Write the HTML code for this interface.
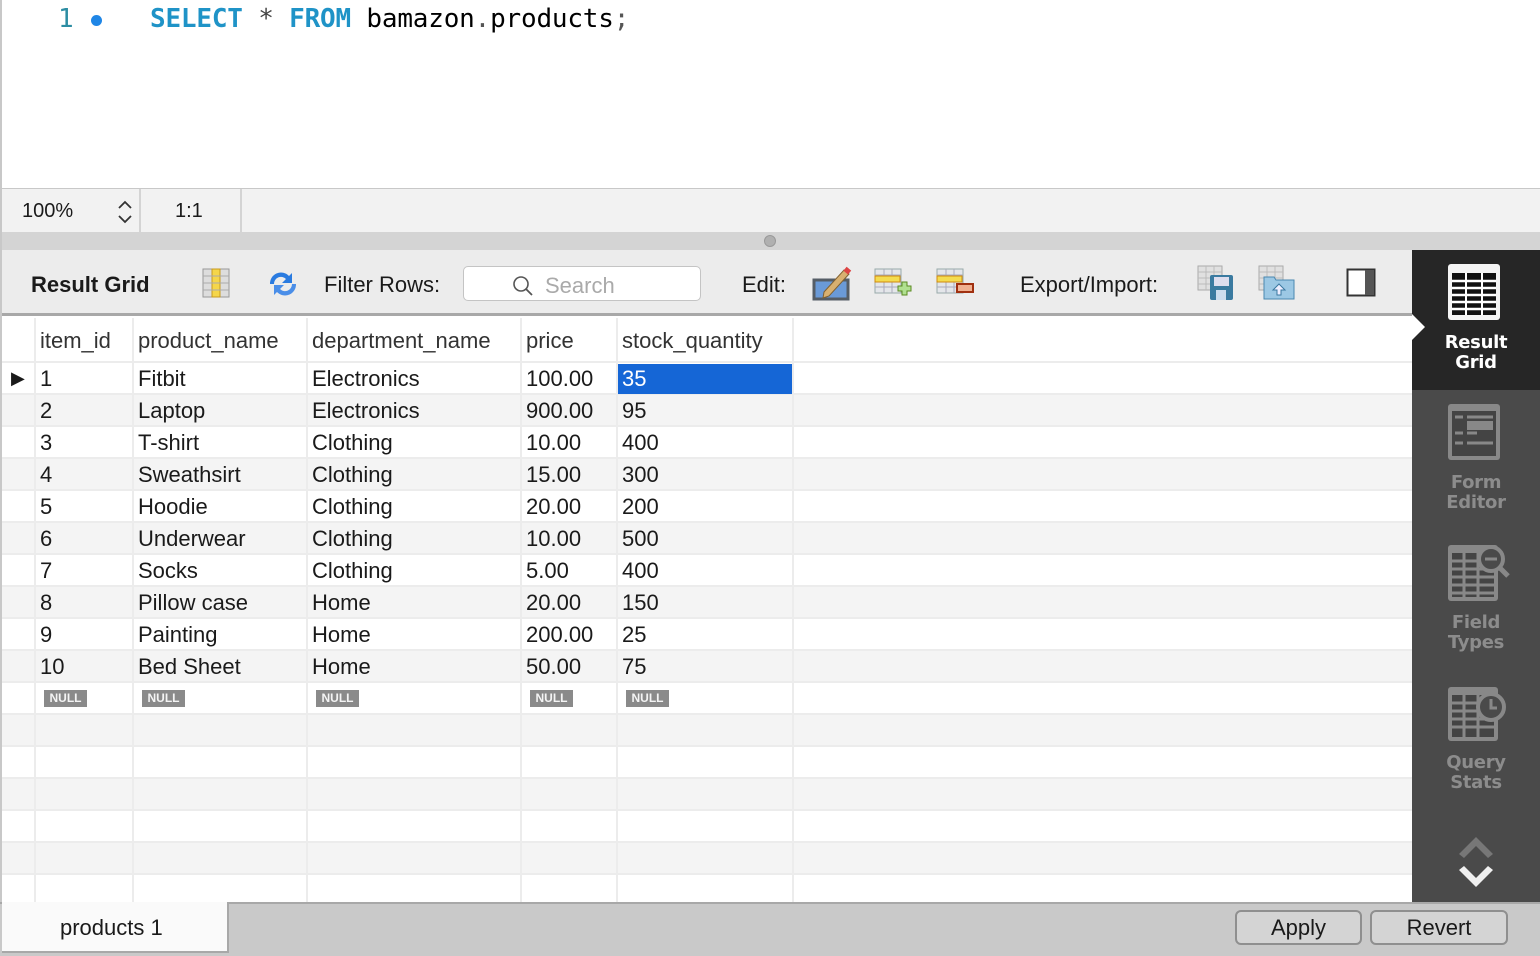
<!DOCTYPE html>
<html><head><style>
*{margin:0;padding:0;box-sizing:border-box}
body{width:1540px;height:956px;overflow:hidden;background:#fff;font-family:"Liberation Sans",sans-serif;position:relative}
.a{position:absolute}
.code{font-family:"DejaVu Sans Mono","Liberation Mono",monospace;font-size:26px;top:4px;white-space:pre;letter-spacing:-0.2px}
.t{font-size:22px;color:#1a1a1a;white-space:nowrap}
.row{position:absolute;left:2px;width:1410px;height:32px;border-bottom:2px solid #ececec}
.vl{position:absolute;top:318px;width:2px;height:584px;background:#ececec}
.null{position:absolute;background:#8a8a8a;color:#f4f4f4;font-size:12px;font-weight:bold;padding:1px 3px;line-height:15px;width:43px;text-align:center}
.side{position:absolute;left:1412px;width:128px;text-align:center;font-family:"DejaVu Sans",sans-serif;font-size:18px;line-height:20px;color:#8c8c8c;font-weight:bold;letter-spacing:-0.3px}
.btn{position:absolute;top:910px;height:35px;border:2px solid #8f8f8f;border-radius:6px;background:#d4d4d4;font-size:22px;text-align:center;line-height:31px;color:#1a1a1a}
</style></head><body>
<div class="a" style="left:0;top:0;width:2px;height:956px;background:#c8c8c8"></div>
<div class="a code" style="left:58px;color:#2d8da3">1</div>
<div class="a" style="left:91px;top:15px;width:11px;height:11px;border-radius:50%;background:#1f86e6"></div>
<div class="a code" style="left:150px"><span style="color:#1f93c7;font-weight:bold">SELECT</span> <span style="color:#444">*</span> <span style="color:#1f93c7;font-weight:bold">FROM</span> bamazon<span style="color:#555">.</span>products<span style="color:#555">;</span></div>

<div class="a" style="left:2px;top:188px;width:1538px;height:44px;background:#f2f2f2;border-top:1px solid #c8c8c8"></div>
<div class="a t" style="left:22px;top:200px;font-size:20px">100%</div>
<svg class="a" style="left:117px;top:199px" width="16" height="28"><path d="M2 9l6-6 6 6M2 17l6 6 6-6" fill="none" stroke="#333" stroke-width="1.8"/></svg>
<div class="a" style="left:139px;top:189px;width:2px;height:43px;background:#d4d4d4"></div>
<div class="a t" style="left:175px;top:200px;font-size:20px">1:1</div>
<div class="a" style="left:240px;top:189px;width:2px;height:43px;background:#d4d4d4"></div>
<div class="a" style="left:2px;top:232px;width:1538px;height:18px;background:#d4d4d4"></div>
<div class="a" style="left:764px;top:235px;width:12px;height:12px;border-radius:50%;background:#b0b0b0;border:1px solid #999"></div>

<div class="a" style="left:2px;top:250px;width:1410px;height:66px;background:#ececec;border-bottom:3px solid #a8a8a8"></div>
<div class="a t" style="left:31px;top:272px;font-weight:bold">Result Grid</div>
<svg class="a" style="left:202px;top:268px" width="28" height="30"><rect x="1" y="1" width="26" height="28" fill="#ddd" stroke="#999"/><rect x="10" y="1" width="8" height="28" fill="#f5d64a" stroke="#c89a20"/><path d="M1 8h26M1 15h26M1 22h26" stroke="#aaa"/></svg>
<svg class="a" style="left:266px;top:270px" width="34" height="28"><path d="M4 14a11 11 0 0 1 19-8l3-3v10h-10l4-4a7 7 0 0 0-12 5z" fill="#2a7be0"/><path d="M30 14a11 11 0 0 1-19 8l-3 3v-10h10l-4 4a7 7 0 0 0 12-5z" fill="#4a8ee8"/></svg>
<div class="a t" style="left:324px;top:272px">Filter Rows:</div>
<div class="a" style="left:463px;top:266px;width:238px;height:35px;background:#fff;border:1px solid #c4c4c4;border-radius:5px"></div>
<svg class="a" style="left:512px;top:275px" width="22" height="22"><circle cx="9" cy="9" r="7" fill="none" stroke="#555" stroke-width="1.6"/><path d="M14 14l6 6" stroke="#555" stroke-width="1.8"/></svg>
<div class="a t" style="left:545px;top:273px;color:#aaa">Search</div>
<div class="a t" style="left:742px;top:272px">Edit:</div>
<svg class="a" style="left:812px;top:266px" width="40" height="36"><rect x="2" y="14" width="34" height="19" fill="#6a9ad8" stroke="#555d66" stroke-width="3"/><path d="M12 26l20-22 5 4-20 22-6 2z" fill="#d8b070" stroke="#806030"/><rect x="32" y="2" width="6" height="5" fill="#d44" transform="rotate(40 35 5)"/></svg>
<svg class="a" style="left:874px;top:268px" width="38" height="30"><rect x="1" y="1" width="26" height="24" fill="#e4e6ea" stroke="#9aa"/><path d="M1 7h26M1 19h26M10 1v24M18 1v24" stroke="#aab"/><rect x="1" y="8" width="25" height="6" fill="#f4dc50" stroke="#d08a10"/><path d="M27 18h4v-4h5v4h4v5h-4v4h-5v-4h-4z" fill="#b0e090" stroke="#5a8a20" transform="translate(-3,0)"/></svg>
<svg class="a" style="left:936px;top:268px" width="40" height="30"><rect x="1" y="1" width="26" height="24" fill="#e4e6ea" stroke="#9aa"/><path d="M1 7h26M1 19h26M10 1v24M18 1v24" stroke="#aab"/><rect x="1" y="8" width="25" height="6" fill="#f4dc50" stroke="#d08a10"/><rect x="21" y="16" width="16" height="8" fill="#f0b090" stroke="#a03010" stroke-width="2"/></svg>
<div class="a t" style="left:1020px;top:272px">Export/Import:</div>
<svg class="a" style="left:1197px;top:265px" width="38" height="36"><rect x="1" y="1" width="24" height="24" fill="#e0e0e0" stroke="#aaa"/><path d="M1 7h24M1 13h24M1 19h24M9 1v24M17 1v24" stroke="#bbb"/><rect x="13" y="10" width="23" height="25" rx="2" fill="#3a7aa0"/><rect x="17" y="12" width="15" height="9" fill="#dde"/><rect x="19" y="25" width="10" height="10" fill="#cde"/></svg>
<svg class="a" style="left:1258px;top:265px" width="38" height="36"><rect x="1" y="1" width="24" height="24" fill="#e0e0e0" stroke="#aaa"/><path d="M1 7h24M1 13h24M1 19h24M9 1v24M17 1v24" stroke="#bbb"/><path d="M6 12h10l2 3h18v19h-30z" fill="#9cc8e4" stroke="#4a88b0"/><path d="M21 19l6 6h-4v5h-4v-5h-4z" fill="#eef" stroke="#3a78a0"/></svg>
<svg class="a" style="left:1346px;top:268px" width="30" height="30"><rect x="1.5" y="1.5" width="27" height="26" fill="#fff" stroke="#333" stroke-width="2"/><rect x="19" y="2" width="9" height="25" fill="#555"/></svg>

<div class="a" style="left:1412px;top:250px;width:128px;height:140px;background:#262626"></div>
<div class="a" style="left:1412px;top:390px;width:128px;height:512px;background:#4a4a4a"></div>
<div class="a" style="left:1412px;top:314px;width:0;height:0;border-top:13px solid transparent;border-bottom:13px solid transparent;border-left:13px solid #fff"></div>
<svg class="a" style="left:1447px;top:263px" width="54" height="60"><rect x="1" y="1" width="52" height="56" rx="3" fill="#f4f4f4"/><rect x="5" y="10" width="44" height="42" fill="#111"/><path d="M5 18h44M5 25h44M5 32h44M5 39h44M5 46h44" stroke="#fff" stroke-width="2.5"/><path d="M19 10v42M35 10v42" stroke="#fff" stroke-width="2"/></svg>
<div class="side" style="top:333px;color:#fff">Result<br>Grid</div>
<svg class="a" style="left:1447px;top:403px" width="54" height="60"><rect x="1" y="1" width="52" height="56" rx="3" fill="#888"/><rect x="5" y="8" width="44" height="45" fill="#444"/><path d="M8 14h8M20 14h26M8 30h8M20 30h10M8 40h8M20 40h26" stroke="#888" stroke-width="3"/><rect x="20" y="18" width="26" height="9" fill="#888"/></svg>
<div class="side" style="top:473px">Form<br>Editor</div>
<svg class="a" style="left:1447px;top:543px" width="64" height="60"><rect x="1" y="2" width="50" height="56" rx="3" fill="#888"/><rect x="5" y="10" width="42" height="44" fill="#444"/><path d="M5 18h42M5 26h42M5 34h42M5 42h42M5 50h42M17 10v44M31 10v44" stroke="#888" stroke-width="3"/><circle cx="44" cy="16" r="12" fill="#4a4a4a" stroke="#888" stroke-width="4"/><path d="M38 16h12" stroke="#888" stroke-width="3"/><path d="M52 24l9 9" stroke="#888" stroke-width="5"/></svg>
<div class="side" style="top:613px">Field<br>Types</div>
<svg class="a" style="left:1447px;top:683px" width="64" height="60"><rect x="1" y="4" width="50" height="54" rx="3" fill="#888"/><rect x="5" y="12" width="42" height="42" fill="#444"/><path d="M5 20h42M5 28h42M5 36h42M5 44h42M17 12v42M31 12v42" stroke="#888" stroke-width="3"/><circle cx="44" cy="24" r="13" fill="#4a4a4a" stroke="#888" stroke-width="4"/><path d="M44 16v9h6" stroke="#888" stroke-width="3" fill="none"/><rect x="40" y="4" width="8" height="5" fill="#888"/></svg>
<div class="side" style="top:753px">Query<br>Stats</div>
<svg class="a" style="left:1456px;top:832px" width="40" height="60"><path d="M3 22l17-17 17 17-5 4-12-12-12 12z" fill="#777"/><path d="M3 38l17 17 17-17-5-4-12 12-12-12z" fill="#f0f0f0"/></svg>

<div class="row" style="top:318px;height:45px"></div>
<div class="row" style="top:363px"></div>
<div class="row" style="top:395px;background:#f4f4f4"></div>
<div class="row" style="top:427px"></div>
<div class="row" style="top:459px;background:#f4f4f4"></div>
<div class="row" style="top:491px"></div>
<div class="row" style="top:523px;background:#f4f4f4"></div>
<div class="row" style="top:555px"></div>
<div class="row" style="top:587px;background:#f4f4f4"></div>
<div class="row" style="top:619px"></div>
<div class="row" style="top:651px;background:#f4f4f4"></div>
<div class="row" style="top:683px"></div>
<div class="row" style="top:715px;background:#f4f4f4"></div>
<div class="row" style="top:747px"></div>
<div class="row" style="top:779px;background:#f4f4f4"></div>
<div class="row" style="top:811px"></div>
<div class="row" style="top:843px;background:#f4f4f4"></div>
<div class="row" style="top:875px;border:0"></div>
<div class="vl" style="left:34px"></div><div class="vl" style="left:132px"></div><div class="vl" style="left:306px"></div><div class="vl" style="left:520px"></div><div class="vl" style="left:616px"></div><div class="vl" style="left:792px"></div>
<div class="a" style="left:618px;top:364px;width:174px;height:30px;background:#1566d6"></div>
<div class="a t" style="left:11px;top:368px;font-size:18px">&#9654;</div>

<div class="a t" style="left:40px;top:328px;color:#333">item_id</div>
<div class="a t" style="left:138px;top:328px;color:#333">product_name</div>
<div class="a t" style="left:312px;top:328px;color:#333">department_name</div>
<div class="a t" style="left:526px;top:328px;color:#333">price</div>
<div class="a t" style="left:622px;top:328px;color:#333">stock_quantity</div>

<div class="a t" style="left:40px;top:363px;line-height:32px">1<br>2<br>3<br>4<br>5<br>6<br>7<br>8<br>9<br>10</div>
<div class="a t" style="left:138px;top:363px;line-height:32px">Fitbit<br>Laptop<br>T-shirt<br>Sweathsirt<br>Hoodie<br>Underwear<br>Socks<br>Pillow case<br>Painting<br>Bed Sheet</div>
<div class="a t" style="left:312px;top:363px;line-height:32px">Electronics<br>Electronics<br>Clothing<br>Clothing<br>Clothing<br>Clothing<br>Clothing<br>Home<br>Home<br>Home</div>
<div class="a t" style="left:526px;top:363px;line-height:32px">100.00<br>900.00<br>10.00<br>15.00<br>20.00<br>10.00<br>5.00<br>20.00<br>200.00<br>50.00</div>
<div class="a t" style="left:622px;top:363px;line-height:32px"><span style="color:#fff">35</span><br>95<br>400<br>300<br>200<br>500<br>400<br>150<br>25<br>75</div>
<div class="null" style="left:44px;top:690px">NULL</div>
<div class="null" style="left:142px;top:690px">NULL</div>
<div class="null" style="left:316px;top:690px">NULL</div>
<div class="null" style="left:530px;top:690px">NULL</div>
<div class="null" style="left:626px;top:690px">NULL</div>

<div class="a" style="left:0;top:902px;width:1540px;height:54px;background:#c9c9c9;border-top:2px solid #a8a8a8"></div>
<div class="a" style="left:2px;top:902px;width:227px;height:51px;background:#fafafa;border-right:2px solid #a8a8a8;border-bottom:2px solid #a8a8a8"></div>
<div class="a t" style="left:60px;top:915px;font-size:22px">products 1</div>
<div class="btn" style="left:1235px;width:127px">Apply</div>
<div class="btn" style="left:1370px;width:138px">Revert</div>
</body></html>
